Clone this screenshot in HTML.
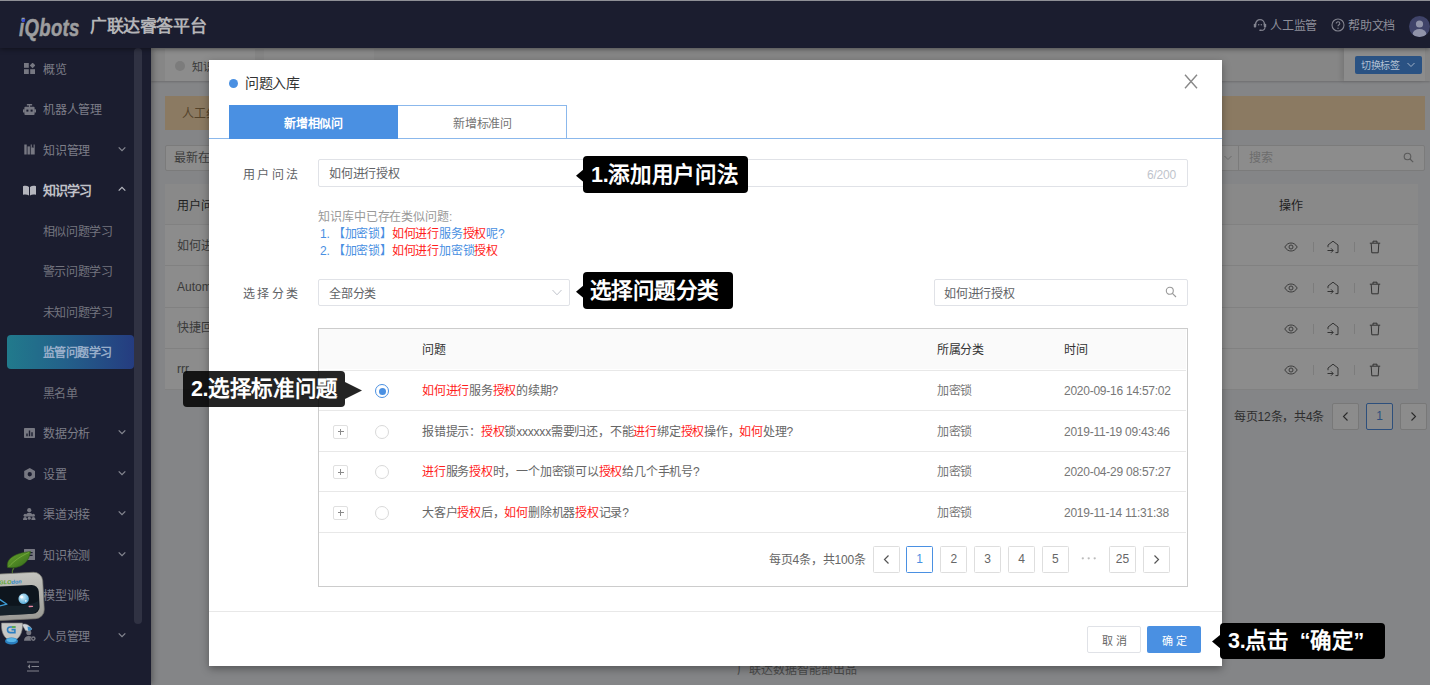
<!DOCTYPE html>
<html lang="zh-CN">
<head>
<meta charset="utf-8">
<title>iQbots</title>
<style>
*{box-sizing:border-box;margin:0;padding:0}
html,body{width:1430px;height:685px;overflow:hidden;background:#848587}
body{font-family:"Liberation Sans",sans-serif;font-size:12px;color:#606266;position:relative}
.abs,#app *{position:absolute}
#app{position:absolute;left:0;top:0;width:1430px;height:685px;overflow:hidden}
.t{white-space:nowrap;line-height:16px;height:16px;margin-top:1px}
/* header */
#hdr{left:0;top:0;width:1430px;height:48px;background:#1b1d2f;border-top:1px solid #8f9096;box-shadow:0 1px 5px rgba(0,0,0,.45)}
#side{left:0;top:48px;width:151px;height:637px;background:#1b1d2f;box-shadow:1px 0 7px rgba(0,0,0,.4)}
.si{left:43px;color:#7d7e88;font-size:12px;letter-spacing:-0.25px}
.sub{left:42.5px;color:#74757f;font-size:12px;letter-spacing:-0.3px}
.chev{left:118px;width:8px;height:6px}
.ico{left:24px;width:11px;height:11px}
/* page under mask */
.m{background:#8c8c8c}
/* modal */
#modal{left:209px;top:60px;width:1013px;height:606px;background:#fff;box-shadow:0 3px 8px rgba(0,0,0,.35)}
.callout{background:#000;border-radius:4px;color:#fff;font-weight:bold;font-size:21.5px;line-height:37px;height:37px;white-space:nowrap;padding-left:9px;letter-spacing:-0.3px}
.red{color:#ff1c1c;position:static!important}
.blu{color:#4a90e2;position:static!important}
.pg{width:27px;height:27px;border:1px solid #dedede;border-radius:1.5px;background:#fff;text-align:center;line-height:25px;color:#666;font-size:12px}
</style>
</head>
<body>
<div id="app">

<!-- ===== page under mask ===== -->
<div id="page" style="left:151px;top:48px;width:1279px;height:637px;background:#848587">
  <div style="left:0;top:0;width:1279px;height:33px;background:#868686;box-shadow:0 1px 2px rgba(0,0,0,.18)"></div>
  <div style="left:14px;top:1px;width:90px;height:32px;background:#8c8c8c"></div>
  <div style="left:113px;top:1px;width:110px;height:32px;background:#8a8a8a"></div>
  <div style="left:24px;top:13px;width:10px;height:10px;border-radius:50%;background:#7c7c7c"></div>
  <div class="t" style="left:41px;top:10px;font-size:11px;color:#3a3a3a">知识</div>
  <div style="left:1193px;top:0;width:81px;height:33px;background:#8c8c8c;box-shadow:-3px 0 4px rgba(0,0,0,.10)"></div>
  <div style="left:1204px;top:8px;width:67px;height:18px;background:#2a5283;border-radius:2px"></div>
  <div class="t" style="left:1210px;top:9px;font-size:10px;color:#b4c2d5;letter-spacing:-0.3px">切换标签</div>
  <svg style="left:1256px;top:14px;width:8px;height:6px" viewBox="0 0 8 6" fill="none" stroke="#9fb0c6" stroke-width="1"><path d="M.5 1L4 4.5L7.5 1"/></svg>
  <div style="left:14px;top:47.5px;width:1260px;height:34px;background:#8b7a62"></div>
  <div class="t" style="left:30px;top:57px;font-size:12px;color:#54432a;margin-left:1px">人工纠</div>
  <div style="left:14px;top:96.5px;width:1074px;height:26px;background:#8c8c8c;border:1px solid #7b7b7b;border-radius:2px 0 0 2px"></div>
  <div class="t" style="left:23px;top:101px;font-size:12px;color:#3c3c3c">最新在</div>
  <svg style="left:1072.5px;top:107px;width:8px;height:6px" viewBox="0 0 8 6" fill="none" stroke="#6c6c6c" stroke-width="1"><path d="M.5 1L4 4.5L7.5 1"/></svg>
  <div style="left:1087px;top:96.5px;width:187px;height:26px;background:#8c8c8c;border:1px solid #7b7b7b;border-radius:0 2px 2px 0"></div>
  <div class="t" style="left:1098px;top:101px;font-size:12px;color:#6d6d6d">搜索</div>
  <svg style="left:1252px;top:104px;width:11px;height:11px" viewBox="0 0 11 11" fill="none" stroke="#5a5a5a" stroke-width="1.1"><circle cx="4.5" cy="4.5" r="3.3"/><path d="M7 7l3.2 3.2"/></svg>
  <div style="left:14px;top:136.3px;width:1253px;height:40px;background:#898989"></div>
  <div style="left:14px;top:177px;width:1253px;height:164px;background:#8c8c8c"></div>
  <div style="left:14px;top:176.3px;width:1253px;height:1px;background:#818181"></div>
  <div style="left:14px;top:217.4px;width:1253px;height:1px;background:#818181"></div>
  <div style="left:14px;top:258.5px;width:1253px;height:1px;background:#818181"></div>
  <div style="left:14px;top:299.6px;width:1253px;height:1px;background:#818181"></div>
  <div style="left:14px;top:340.7px;width:1253px;height:1px;background:#818181"></div>
  <div class="t" style="left:26px;top:149px;font-size:12px;color:#1f1f1f">用户问</div>
  <div class="t" style="left:1128px;top:149px;font-size:12px;color:#1f1f1f">操作</div>
  <div class="t" style="left:26px;top:189px;font-size:12px;color:#3a3a3a">如何进</div>
  <div class="t" style="left:26px;top:230px;font-size:12px;color:#3a3a3a">Autom</div>
  <div class="t" style="left:26px;top:271px;font-size:12px;color:#3a3a3a">快捷回</div>
  <div class="t" style="left:26px;top:312px;font-size:12px;color:#3a3a3a">rrr</div>
  <svg style="left:1133px;top:193.5px;width:14px;height:10px" viewBox="0 0 14 10" fill="none" stroke="#333" stroke-width=".9"><path d="M.8 5C2.5 2.2 4.6 1 7 1s4.5 1.2 6.2 4C11.5 7.8 9.4 9 7 9S2.5 7.8.8 5z"/><circle cx="7" cy="5" r="2"/></svg>
  <div style="left:1162px;top:193.5px;width:1px;height:10px;background:#7c7c7c"></div>
  <svg style="left:1175px;top:191.5px;width:14px;height:14px" viewBox="0 0 14 14" fill="none" stroke="#333" stroke-width="1"><path d="M2 7.2V5l5-3.8L12 5v7.6H9.5"/><path d="M1.5 10.5h5.5M5 8.3l2.2 2.2L5 12.7"/></svg>
  <div style="left:1203px;top:193.5px;width:1px;height:10px;background:#7c7c7c"></div>
  <svg style="left:1218px;top:191.5px;width:12px;height:14px" viewBox="0 0 12 14" fill="none" stroke="#333" stroke-width="1"><path d="M.8 3.2h10.4M4 3V1.2h4V3M2.2 3.4l.6 9.4h6.4l.6-9.4"/></svg>
  <svg style="left:1133px;top:234.5px;width:14px;height:10px" viewBox="0 0 14 10" fill="none" stroke="#333" stroke-width=".9"><path d="M.8 5C2.5 2.2 4.6 1 7 1s4.5 1.2 6.2 4C11.5 7.8 9.4 9 7 9S2.5 7.8.8 5z"/><circle cx="7" cy="5" r="2"/></svg>
  <div style="left:1162px;top:234.5px;width:1px;height:10px;background:#7c7c7c"></div>
  <svg style="left:1175px;top:232.5px;width:14px;height:14px" viewBox="0 0 14 14" fill="none" stroke="#333" stroke-width="1"><path d="M2 7.2V5l5-3.8L12 5v7.6H9.5"/><path d="M1.5 10.5h5.5M5 8.3l2.2 2.2L5 12.7"/></svg>
  <div style="left:1203px;top:234.5px;width:1px;height:10px;background:#7c7c7c"></div>
  <svg style="left:1218px;top:232.5px;width:12px;height:14px" viewBox="0 0 12 14" fill="none" stroke="#333" stroke-width="1"><path d="M.8 3.2h10.4M4 3V1.2h4V3M2.2 3.4l.6 9.4h6.4l.6-9.4"/></svg>
  <svg style="left:1133px;top:275.5px;width:14px;height:10px" viewBox="0 0 14 10" fill="none" stroke="#333" stroke-width=".9"><path d="M.8 5C2.5 2.2 4.6 1 7 1s4.5 1.2 6.2 4C11.5 7.8 9.4 9 7 9S2.5 7.8.8 5z"/><circle cx="7" cy="5" r="2"/></svg>
  <div style="left:1162px;top:275.5px;width:1px;height:10px;background:#7c7c7c"></div>
  <svg style="left:1175px;top:273.5px;width:14px;height:14px" viewBox="0 0 14 14" fill="none" stroke="#333" stroke-width="1"><path d="M2 7.2V5l5-3.8L12 5v7.6H9.5"/><path d="M1.5 10.5h5.5M5 8.3l2.2 2.2L5 12.7"/></svg>
  <div style="left:1203px;top:275.5px;width:1px;height:10px;background:#7c7c7c"></div>
  <svg style="left:1218px;top:273.5px;width:12px;height:14px" viewBox="0 0 12 14" fill="none" stroke="#333" stroke-width="1"><path d="M.8 3.2h10.4M4 3V1.2h4V3M2.2 3.4l.6 9.4h6.4l.6-9.4"/></svg>
  <svg style="left:1133px;top:316.5px;width:14px;height:10px" viewBox="0 0 14 10" fill="none" stroke="#333" stroke-width=".9"><path d="M.8 5C2.5 2.2 4.6 1 7 1s4.5 1.2 6.2 4C11.5 7.8 9.4 9 7 9S2.5 7.8.8 5z"/><circle cx="7" cy="5" r="2"/></svg>
  <div style="left:1162px;top:316.5px;width:1px;height:10px;background:#7c7c7c"></div>
  <svg style="left:1175px;top:314.5px;width:14px;height:14px" viewBox="0 0 14 14" fill="none" stroke="#333" stroke-width="1"><path d="M2 7.2V5l5-3.8L12 5v7.6H9.5"/><path d="M1.5 10.5h5.5M5 8.3l2.2 2.2L5 12.7"/></svg>
  <div style="left:1203px;top:316.5px;width:1px;height:10px;background:#7c7c7c"></div>
  <svg style="left:1218px;top:314.5px;width:12px;height:14px" viewBox="0 0 12 14" fill="none" stroke="#333" stroke-width="1"><path d="M.8 3.2h10.4M4 3V1.2h4V3M2.2 3.4l.6 9.4h6.4l.6-9.4"/></svg>
  <div class="t" style="left:1083px;top:360px;font-size:12px;color:#2e2e2e;letter-spacing:-0.2px">每页12条，共4条</div>
  <div style="left:1180.5px;top:355px;width:27px;height:27px;background:#8c8c8c;border:1px solid #787878;border-radius:2px"><svg style="left:8px;top:7px;width:9px;height:11px" viewBox="0 0 9 11" fill="none" stroke="#2a2a2a" stroke-width="1.1"><path d="M6.5 1.5L2.5 5.5L6.5 9.5"/></svg></div>
  <div style="left:1215px;top:355px;width:27px;height:27px;background:#8c8c8c;border:1px solid #2d4f7c;border-radius:2px;text-align:center;line-height:25px;color:#2d4f7c;font-size:12px">1</div>
  <div style="left:1248.5px;top:355px;width:27px;height:27px;background:#8c8c8c;border:1px solid #787878;border-radius:2px"><svg style="left:8px;top:7px;width:9px;height:11px" viewBox="0 0 9 11" fill="none" stroke="#2a2a2a" stroke-width="1.1"><path d="M2.5 1.5L6.5 5.5L2.5 9.5"/></svg></div>
  <div class="t" style="left:586px;top:612.5px;font-size:12px;color:#4a4a4a">广联达数据智能部出品</div>
</div>

<!-- ===== sidebar ===== -->
<div id="side">
  <div style="left:7px;top:287px;width:126.5px;height:33.5px;border-radius:4px;background:linear-gradient(90deg,#217a8c 0%,#23618a 45%,#253c80 100%)"></div>
  <div class="t si" style="top:13px">概览</div>
  <svg style="left:24.1px;top:15.3px;width:11.0px;height:11.0px" viewBox="0 0 11 11" fill="#777882"><rect x="0" y="0" width="4.8" height="4.8"/><rect x="0" y="6.2" width="4.8" height="4.8"/><rect x="6.2" y="6.2" width="4.8" height="4.8"/><path d="M8.6 -.4L11.4 2.4L8.6 5.2L5.8 2.4z"/></svg>
  <div class="t si" style="top:53px">机器人管理</div>
  <svg style="left:23.1px;top:55.8px;width:13.0px;height:11.0px" viewBox="0 0 13 11" fill="#777882"><rect x="1.4" y="2.8" width="10.2" height="8.2" rx="1"/><rect x="3.8" y="0" width="5.4" height="1.6" rx=".5"/><rect x="5.9" y="1" width="1.2" height="2.2"/><rect x="0" y="5.2" width="1.8" height="3.4" rx=".5"/><rect x="11.2" y="5.2" width="1.8" height="3.4" rx=".5"/><rect x="3.4" y="5.6" width="2" height="2" fill="#1b1d2f"/><rect x="7.6" y="5.6" width="2" height="2" fill="#1b1d2f"/></svg>
  <div class="t si" style="top:94px">知识管理</div>
  <svg style="left:24.1px;top:96.3px;width:11.0px;height:11.0px" viewBox="0 0 11 11" fill="#777882"><rect x="0.3" y="0.5" width="2.4" height="10"/><rect x="3.5" y="2.4" width="2.4" height="8.1"/><path d="M6.7 0.5h4v10h-4zM7.8 0.5v3.6l.9-.9.9.9V0.5z" fill-rule="evenodd"/></svg>
  <svg class="chev" style="top:97.7px" viewBox="0 0 8 6" fill="none" stroke="#83848e" stroke-width="1.3"><path d="M.7 1.4L4 4.6L7.3 1.4"/></svg>
  <div class="t si" style="top:134px;color:#c0c1c8;font-weight:bold;font-size:13px;letter-spacing:-0.9px">知识学习</div>
  <svg style="left:23.1px;top:136.8px;width:13.0px;height:11.0px" viewBox="0 0 13 11" fill="#b4b5bd"><path d="M0 1.2c2.3-.7 4.4-.4 6 .8v8.4c-1.6-1-3.7-1.3-6-.6z"/><path d="M13 1.2c-2.3-.7-4.4-.4-6 .8v8.4c1.6-1 3.7-1.3 6-.6z"/></svg>
  <svg class="chev" style="top:138.2px" viewBox="0 0 8 6" fill="none" stroke="#b4b5bd" stroke-width="1.3"><path d="M.7 4.6L4 1.4L7.3 4.6"/></svg>
  <div class="t sub" style="top:175px">相似问题学习</div>
  <div class="t sub" style="top:215px">警示问题学习</div>
  <div class="t sub" style="top:256px">未知问题学习</div>
  <div class="t sub" style="top:296px;color:#98aeca;font-weight:bold;letter-spacing:-0.5px">监管问题学习</div>
  <div class="t sub" style="top:337px">黑名单</div>
  <div class="t si" style="top:377px">数据分析</div>
  <svg style="left:24.1px;top:379.8px;width:11.0px;height:11.0px" viewBox="0 0 11 11" fill="#777882"><path d="M.8 0h9.4a.8.8 0 0 1 .8.8v8.4a.8.8 0 0 1-.8.8H.8a.8.8 0 0 1-.8-.8V.8A.8.8 0 0 1 .8 0zM2.3 5.4h1.4v2.800H2.3zM4.800 2.6h1.4v5.6H4.800zM7.3 4.2h1.4v4H7.3z" fill-rule="evenodd"/></svg>
  <svg class="chev" style="top:381.2px" viewBox="0 0 8 6" fill="none" stroke="#83848e" stroke-width="1.3"><path d="M.7 1.4L4 4.6L7.3 1.4"/></svg>
  <div class="t si" style="top:418px">设置</div>
  <svg style="left:23.9px;top:419.6px;width:11.5px;height:12.5px" viewBox="0 0 11.5 12.5" fill="#777882"><path d="M5.75 0L11.3 3.1v6.3L5.75 12.5L.2 9.4V3.1zM5.75 4.1a2.15 2.15 0 1 0 0 4.3a2.15 2.15 0 1 0 0-4.3z" fill-rule="evenodd"/></svg>
  <svg class="chev" style="top:421.7px" viewBox="0 0 8 6" fill="none" stroke="#83848e" stroke-width="1.3"><path d="M.7 1.4L4 4.6L7.3 1.4"/></svg>
  <div class="t si" style="top:458px">渠道对接</div>
  <svg style="left:23.4px;top:460.3px;width:12.5px;height:12.0px" viewBox="0 0 12.5 12" fill="#777882"><circle cx="6.25" cy="2.2" r="2.1"/><path d="M2.6 8.6c0-2.4 1.5-3.800 3.650-3.800s3.650 1.4 3.650 3.800z"/><circle cx="2.1" cy="7.3" r="1.5"/><path d="M0 12c0-1.900.9-3 2.1-3s2.1 1.1 2.1 3z"/><circle cx="10.4" cy="7.3" r="1.5"/><path d="M8.3 12c0-1.900.9-3 2.1-3s2.1 1.1 2.1 3z"/><circle cx="6.25" cy="10.2" r="1.6"/></svg>
  <svg class="chev" style="top:462.2px" viewBox="0 0 8 6" fill="none" stroke="#83848e" stroke-width="1.3"><path d="M.7 1.4L4 4.6L7.3 1.4"/></svg>
  <div class="t si" style="top:499px">知识检测</div>
  <svg style="left:24.1px;top:501.3px;width:11.0px;height:11.0px" viewBox="0 0 11 11" fill="#777882"><path d="M.5 0h10a.5.5 0 0 1 .5.5v10a.5.5 0 0 1-.5.5H.5a.5.5 0 0 1-.5-.5V.5A.5.5 0 0 1 .5 0zM2.4 3h6.2v1.3H2.4zM2.4 5.7h6.2V7H2.4z" fill-rule="evenodd"/></svg>
  <svg class="chev" style="top:502.7px" viewBox="0 0 8 6" fill="none" stroke="#83848e" stroke-width="1.3"><path d="M.7 1.4L4 4.6L7.3 1.4"/></svg>
  <div class="t si" style="top:539px">模型训练</div>
  <div class="t si" style="top:580px">人员管理</div>
  <svg style="left:23.6px;top:582.3px;width:12.0px;height:11.0px" viewBox="0 0 12 11" fill="#777882"><circle cx="4.800" cy="2.7" r="2.5"/><path d="M0 10.800c0-3 2-4.900 4.800-4.900c1 0 1.900.3 2.7.8a3.3 3.3 0 0 0-.4 4.1z"/><circle cx="9.3" cy="8.6" r="2.3"/><circle cx="9.3" cy="8.6" r=".9" fill="#1b1d2f"/></svg>
  <svg class="chev" style="top:583.7px" viewBox="0 0 8 6" fill="none" stroke="#83848e" stroke-width="1.3"><path d="M.7 1.4L4 4.6L7.3 1.4"/></svg>
  <svg style="left:27px;top:612.5px;width:12px;height:11px" viewBox="0 0 12 11" fill="none" stroke="#83848e" stroke-width="1.2"><path d="M0 1h12M4.5 5.5H12M0 10h12"/><path d="M3 3.3L.6 5.5L3 7.7z" fill="#83848e" stroke="none"/></svg>
  <div style="left:134px;top:0;width:8px;height:576px;background:#303243;border-radius:4px"></div>
</div>

<!-- ===== header ===== -->
<div id="hdr">
  <div class="t" style="left:18.5px;top:12px;font-size:24px;line-height:28px;height:28px;font-style:italic;font-weight:bold;color:#9d9d9f;-webkit-text-stroke:0.5px #9d9d9f;letter-spacing:0.4px;transform:scaleX(.775);transform-origin:0 50%"><span style="position:static;color:#9d9d9f">i</span>Qbots</div>
  <div style="left:21.6px;top:17.6px;width:3.4px;height:3px;background:#3d4fd6;transform:skewX(-14deg)"></div>
  <div class="t" style="left:90px;top:13px;font-size:17px;line-height:24px;height:24px;font-weight:bold;color:#b4b4b7;letter-spacing:-0.4px">广联达睿答平台</div>
  <!-- headset -->
  <svg style="left:1253px;top:17px;width:14px;height:14px" viewBox="0 0 14 14" fill="none" stroke="#82838f" stroke-width="1.4"><path d="M2.6 7.2V6a4.4 4.4 0 0 1 8.8 0v1.2"/><rect x=".8" y="5.8" width="2.4" height="3.8" rx=".8" fill="#82838f" stroke="none"/><rect x="10.8" y="5.8" width="2.4" height="3.8" rx=".8" fill="#82838f" stroke="none"/><path d="M11.9 9.5c0 1.9-1.7 2.9-3.6 2.9" stroke-width="1.1"/><rect x="6.2" y="11.5" width="2.6" height="1.6" rx=".8" fill="#82838f" stroke="none"/><circle cx="5.7" cy="6.8" r=".75" fill="#82838f" stroke="none"/><circle cx="8.3" cy="6.8" r=".75" fill="#82838f" stroke="none"/></svg>
  <div class="t" style="left:1270px;top:16px;font-size:12px;color:#8d8e99;letter-spacing:-0.2px">人工监管</div>
  <!-- help -->
  <svg style="left:1331px;top:17px;width:14px;height:14px" viewBox="0 0 14 14" fill="none" stroke="#82838f" stroke-width="1.1"><circle cx="7" cy="7" r="6"/><path d="M5.2 5.6c0-1.1.8-1.8 1.8-1.8s1.8.7 1.8 1.7c0 1.3-1.8 1.3-1.8 2.8"/><circle cx="7" cy="10.2" r=".7" fill="#82838f" stroke="none"/></svg>
  <div class="t" style="left:1348px;top:16px;font-size:12px;color:#8d8e99;letter-spacing:-0.2px">帮助文档</div>
  <!-- avatar -->
  <svg style="left:1409px;top:15px;width:21px;height:21px" viewBox="0 0 21 21"><defs><clipPath id="av"><circle cx="10.5" cy="10.5" r="10.5"/></clipPath></defs><circle cx="10.5" cy="10.5" r="10.5" fill="#3f4369"/><g clip-path="url(#av)" fill="#9093a9"><circle cx="10.5" cy="8" r="3.6"/><ellipse cx="10.5" cy="18" rx="6.8" ry="5"/></g></svg>
</div>

<!-- ===== mascot ===== -->
<svg id="mascot" style="left:0;top:546px;width:48px;height:102px" viewBox="0 546 48 102">
  <defs>
    <linearGradient id="lf" x1="0" y1="0" x2="1" y2="1"><stop offset="0" stop-color="#6aa52e"/><stop offset="1" stop-color="#33691a"/></linearGradient>
    <linearGradient id="hd" x1="0" y1="0" x2="0" y2="1"><stop offset="0" stop-color="#c4c4bf"/><stop offset="1" stop-color="#9a9a95"/></linearGradient>
    <radialGradient id="ey" cx=".4" cy=".35" r=".7"><stop offset="0" stop-color="#d8f1fb"/><stop offset="1" stop-color="#4aa6d6"/></radialGradient>
  </defs>
  <!-- stem + leaf -->
  <path d="M12.5 573.5C12 571 12.5 569.5 14 568" fill="none" stroke="#4b6d2a" stroke-width="1.2"/>
  <path d="M7.5 567.5C6 560 12 553.5 30.5 551.5C29.5 561 22 569.5 7.5 567.5z" fill="url(#lf)" stroke="#2f5a17" stroke-width=".6"/>
  <path d="M9 566.5C14 561 20 556.5 29 552.5" fill="none" stroke="#a4d060" stroke-width=".6" opacity=".7"/>
  <!-- body -->
  <path d="M1.5 623C1 630 3 637 8 639.5h8c4.5-2.5 7-9 6.5-16.5z" fill="#c6c6c4" stroke="#7c7c7c" stroke-width=".6"/>
  <path d="M22 624.5c3-1.5 7 0 10 4.5c-1.5 2-4.5 2.5-6.5 1.5z" fill="#cfd4da" stroke="#8c8c8c" stroke-width=".5"/>
  <path d="M27.5 626.5c2 .2 3.8 1.2 4.5 2.8c-1 1.2-2.6 1.6-4 1.2z" fill="#3a8fcb"/>
  <ellipse cx="11.5" cy="641" rx="6.5" ry="3.6" fill="#2a7fc0"/>
  <ellipse cx="11.5" cy="640" rx="5" ry="2" fill="#58b4e6"/>
  <path d="M15.5 627h-5.2c-1.8 0-2.8 1.1-2.8 2.8s1 2.8 2.8 2.8h4.6v-3h-3.4" fill="none" stroke="#2c7fc2" stroke-width="1.6"/>
  <path d="M15.5 627h-3.5" fill="none" stroke="#5fb233" stroke-width="1.6"/>
  <!-- head -->
  <g transform="rotate(-3 20 596)">
    <rect x="-14" y="573" width="57.5" height="46.5" rx="9" fill="url(#hd)" stroke="#77776f" stroke-width=".7"/>
    <rect x="-12" y="585.5" width="51" height="29" rx="7" fill="#0d151d"/>
    <path d="M-10 600c12 6 36 8 48 2v6.5c-2 5-6 6-10 6h-38z" fill="#1a2731" opacity=".7"/>
    <text x="0" y="583.5" font-family="Liberation Sans, sans-serif" font-size="5.6" font-weight="bold" font-style="italic" fill="#2f86c6" style="position:static"><tspan fill="#58a82c">GLO</tspan>don</text>
    <circle cx="23.5" cy="599" r="5.2" fill="url(#ey)"/>
    <circle cx="21.5" cy="597" r="1.5" fill="#fff" opacity=".9"/>
    <circle cx="25.6" cy="601.2" r=".9" fill="#fff" opacity=".8"/>
    <path d="M-3 596.5l9.5 7l-13 2.5z" fill="none" stroke="#3f9ed8" stroke-width="1.3" stroke-linejoin="round"/>
    <rect x="28" y="606.3" width="4.6" height="1.3" rx=".6" fill="#f08aa6"/>
  </g>
</svg>

<!-- ===== modal ===== -->
<div id="modal">
  <div style="left:19.5px;top:18.5px;width:9px;height:9px;border-radius:50%;background:#4a90e2"></div>
  <div class="t" style="left:36px;top:13px;font-size:14px;line-height:18px;height:18px;color:#333;letter-spacing:-0.3px">问题入库</div>
  <svg style="left:975px;top:13.5px;width:14px;height:15px" viewBox="0 0 14 15" fill="none" stroke="#888" stroke-width="1.4"><path d="M1 .8L13 14.2M13 .8L1 14.2"/></svg>
  <div style="left:0;top:78px;width:1013px;height:1px;background:#8bb8ec"></div>
  <div style="left:20px;top:45px;width:169px;height:34px;background:#4a90e2"></div>
  <div style="left:189px;top:45px;width:169px;height:34px;background:#fff;border:1px solid #8bb8ec;border-left:none"></div>
  <div class="t" style="left:20px;top:55px;width:169px;text-align:center;color:#fff;font-weight:bold;font-size:12px;letter-spacing:-0.25px">新增相似问</div>
  <div class="t" style="left:189px;top:55px;width:169px;text-align:center;color:#747474;font-size:12px;letter-spacing:-0.3px">新增标准问</div>
  <div class="t" style="left:34px;top:106px;color:#606266;font-size:12px;letter-spacing:2.3px">用户问法</div>
  <div style="left:109px;top:99px;width:870px;height:28px;border:1px solid #e0e2e7;border-radius:2px;background:#fff"></div>
  <div class="t" style="left:120px;top:105px;color:#606266;font-size:12px;letter-spacing:-0.2px">如何进行授权</div>
  <div class="t" style="left:938px;top:105.5px;color:#c0c4cc;font-size:12px;letter-spacing:-0.2px">6/200</div>
  <div class="t" style="left:109px;top:148px;color:#999;font-size:12px;letter-spacing:-0.1px">知识库中已存在类似问题:</div>
  <div class="t" style="left:111px;top:165px;color:#4a90e2;font-size:12px;letter-spacing:-0.2px">1. 【加密锁】<span class="red">如何进行</span>服务<span class="red">授权</span>呢?</div>
  <div class="t" style="left:111px;top:182px;color:#4a90e2;font-size:12px;letter-spacing:-0.2px">2. 【加密锁】<span class="red">如何进行</span>加密锁<span class="red">授权</span></div>
  <div class="t" style="left:34px;top:225px;color:#606266;font-size:12px;letter-spacing:2.3px">选择分类</div>
  <div style="left:109px;top:219px;width:252px;height:27px;border:1px solid #e0e2e7;border-radius:2px;background:#fff"></div>
  <div class="t" style="left:120px;top:224.5px;color:#606266;font-size:12px;letter-spacing:-0.2px">全部分类</div>
  <svg style="left:343px;top:229px;width:10px;height:7px" viewBox="0 0 10 7" fill="none" stroke="#c0c4cc" stroke-width="1"><path d="M.5 1L5 5.8L9.5 1"/></svg>
  <div style="left:725px;top:219px;width:254px;height:27px;border:1px solid #e0e2e7;border-radius:2px;background:#fff"></div>
  <div class="t" style="left:735px;top:224.5px;color:#606266;font-size:12px;letter-spacing:-0.2px">如何进行授权</div>
  <svg style="left:956px;top:226px;width:12px;height:12px" viewBox="0 0 12 12" fill="none" stroke="#999" stroke-width="1.1"><circle cx="4.8" cy="4.8" r="3.5"/><path d="M7.4 7.4l3.6 3.6"/></svg>
  <div style="left:109px;top:268px;width:870px;height:259px;border:1px solid #ccc;background:#fff"></div>
  <div style="left:110px;top:269px;width:867px;height:40px;background:#fafafa"></div>
  <div style="left:110px;top:309.5px;width:867px;height:1px;background:#e8e8e8"></div>
  <div style="left:110px;top:350px;width:867px;height:1px;background:#e8e8e8"></div>
  <div style="left:110px;top:390.5px;width:867px;height:1px;background:#e8e8e8"></div>
  <div style="left:110px;top:431px;width:867px;height:1px;background:#e8e8e8"></div>
  <div style="left:110px;top:471.5px;width:867px;height:1px;background:#e8e8e8"></div>
  <div class="t" style="left:213px;top:281px;color:#333;font-size:12px;letter-spacing:-0.3px">问题</div>
  <div class="t" style="left:728px;top:281px;color:#333;font-size:12px;letter-spacing:-0.3px">所属分类</div>
  <div class="t" style="left:855px;top:281px;color:#333;font-size:12px;letter-spacing:-0.3px">时间</div>
  <div style="left:166px;top:324px;width:14px;height:14px;border-radius:50%;border:1px solid #4a90e2;background:#fff"></div>
  <div style="left:169.5px;top:327.5px;width:7px;height:7px;border-radius:50%;background:#4a90e2"></div>
  <div class="t" style="left:213px;top:322px;color:#666;font-size:12px;letter-spacing:-0.22px"><span class="red">如何进行</span>服务<span class="red">授权</span>的续期?</div>
  <div class="t" style="left:728px;top:322px;color:#777;font-size:12px;letter-spacing:-0.4px">加密锁</div>
  <div class="t" style="left:855px;top:322px;color:#777;font-size:12px;letter-spacing:-0.25px">2020-09-16 14:57:02</div>
  <div style="left:124px;top:364.5px;width:15px;height:14px;border:1px solid #e0e0e0;border-radius:2px;background:#fff"></div>
  <div style="left:128.5px;top:371px;width:6px;height:1px;background:#8a8a8a"></div>
  <div style="left:131px;top:368.5px;width:1px;height:6px;background:#8a8a8a"></div>
  <div style="left:166px;top:364.5px;width:14px;height:14px;border-radius:50%;border:1px solid #d9d9d9;background:#fff"></div>
  <div class="t" style="left:213px;top:362.5px;color:#666;font-size:12px;letter-spacing:-0.22px">报错提示：<span class="red">授权</span>锁xxxxxx需要归还，不能<span class="red">进行</span>绑定<span class="red">授权</span>操作，<span class="red">如何</span>处理?</div>
  <div class="t" style="left:728px;top:362.5px;color:#777;font-size:12px;letter-spacing:-0.4px">加密锁</div>
  <div class="t" style="left:855px;top:362.5px;color:#777;font-size:12px;letter-spacing:-0.25px">2019-11-19 09:43:46</div>
  <div style="left:124px;top:405px;width:15px;height:14px;border:1px solid #e0e0e0;border-radius:2px;background:#fff"></div>
  <div style="left:128.5px;top:411.5px;width:6px;height:1px;background:#8a8a8a"></div>
  <div style="left:131px;top:409px;width:1px;height:6px;background:#8a8a8a"></div>
  <div style="left:166px;top:405px;width:14px;height:14px;border-radius:50%;border:1px solid #d9d9d9;background:#fff"></div>
  <div class="t" style="left:213px;top:403px;color:#666;font-size:12px;letter-spacing:-0.22px"><span class="red">进行</span>服务<span class="red">授权</span>时，一个加密锁可以<span class="red">授权</span>给几个手机号?</div>
  <div class="t" style="left:728px;top:403px;color:#777;font-size:12px;letter-spacing:-0.4px">加密锁</div>
  <div class="t" style="left:855px;top:403px;color:#777;font-size:12px;letter-spacing:-0.25px">2020-04-29 08:57:27</div>
  <div style="left:124px;top:445.5px;width:15px;height:14px;border:1px solid #e0e0e0;border-radius:2px;background:#fff"></div>
  <div style="left:128.5px;top:452px;width:6px;height:1px;background:#8a8a8a"></div>
  <div style="left:131px;top:449.5px;width:1px;height:6px;background:#8a8a8a"></div>
  <div style="left:166px;top:445.5px;width:14px;height:14px;border-radius:50%;border:1px solid #d9d9d9;background:#fff"></div>
  <div class="t" style="left:213px;top:443.5px;color:#666;font-size:12px;letter-spacing:-0.22px">大客户<span class="red">授权</span>后，<span class="red">如何</span>删除机器<span class="red">授权</span>记录?</div>
  <div class="t" style="left:728px;top:443.5px;color:#777;font-size:12px;letter-spacing:-0.4px">加密锁</div>
  <div class="t" style="left:855px;top:443.5px;color:#777;font-size:12px;letter-spacing:-0.25px">2019-11-14 11:31:38</div>
  <div class="t" style="left:560px;top:491px;color:#666;font-size:12px;letter-spacing:-0.2px">每页4条，共100条</div>
  <div class="pg" style="left:664px;top:486px;"><svg style="left:8px;top:7px;width:9px;height:11px" viewBox="0 0 9 11" fill="none" stroke="#555" stroke-width="1.2"><path d="M6.5 1.5L2.5 5.5L6.5 9.5"/></svg></div>
  <div class="pg" style="left:697px;top:486px;border-color:#4a90e2;color:#4a90e2;">1</div>
  <div class="pg" style="left:731.3px;top:486px;">2</div>
  <div class="pg" style="left:765.2px;top:486px;">3</div>
  <div class="pg" style="left:799px;top:486px;">4</div>
  <div class="pg" style="left:832.8px;top:486px;">5</div>
  <div class="pg" style="left:900px;top:486px;">25</div>
  <div class="pg" style="left:934px;top:486px;"><svg style="left:8px;top:7px;width:9px;height:11px" viewBox="0 0 9 11" fill="none" stroke="#555" stroke-width="1.2"><path d="M2.5 1.5L6.5 5.5L2.5 9.5"/></svg></div>
  <svg style="left:870px;top:495px;width:20px;height:6px" viewBox="0 0 20 6" fill="#bcbcbc"><circle cx="3.8" cy="3.3" r="1.15"/><circle cx="9.7" cy="3.3" r="1.15"/><circle cx="15.7" cy="3.3" r="1.15"/></svg>
  <div style="left:0;top:551px;width:1013px;height:1px;background:#e8e8e8"></div>
  <div style="left:878px;top:566px;width:54px;height:27px;border:1px solid #e0e2e7;border-radius:2px;background:#fff"></div>
  <div class="t" style="left:878px;top:572px;width:54px;text-align:center;color:#666;font-size:11px;letter-spacing:3px;text-indent:3px">取消</div>
  <div style="left:938px;top:566px;width:54px;height:27px;border-radius:2px;background:#4a90e2"></div>
  <div class="t" style="left:938px;top:572px;width:54px;text-align:center;color:#fff;font-size:11px;letter-spacing:3px;text-indent:3px">确定</div>
</div>

<!-- ===== callouts ===== -->
<div id="callouts" style="left:0;top:0;width:1430px;height:685px">
  <div class="callout" style="left:583px;top:155.5px;width:165px;height:37.5px;line-height:38.5px;padding-left:8px">1.添加用户问法</div>
  <svg style="left:576px;top:168.5px;width:8px;height:13.4px" viewBox="0 0 8 14" preserveAspectRatio="none"><path d="M8 0L0 7L8 14z" fill="#000"/></svg>
  <div class="callout" style="left:583px;top:272px;width:150px;height:37px;line-height:38px;padding-left:7px;letter-spacing:-0.6px">选择问题分类</div>
  <svg style="left:575.6px;top:284.6px;width:8px;height:13.4px" viewBox="0 0 8 14" preserveAspectRatio="none"><path d="M8 0L0 7L8 14z" fill="#000"/></svg>
  <div class="callout" style="left:183px;top:371px;width:162px;height:36px;line-height:36px;padding-left:8px;letter-spacing:-0.4px;background:rgba(0,0,0,.86)">2.选择标准问题</div>
  <svg style="left:345px;top:382px;width:17px;height:17px" viewBox="0 0 17 17"><path d="M0 0L17 8.5L0 17z" fill="rgba(0,0,0,.86)"/></svg>
  <div class="callout" style="left:1220px;top:622.7px;width:164.5px;height:36px;line-height:37px;padding-left:8px">3.点击<span style="position:static;margin-left:11px">“确定”</span></div>
  <svg style="left:1212.4px;top:634.5px;width:8px;height:13.2px" viewBox="0 0 8 14" preserveAspectRatio="none"><path d="M8 0L0 7L8 14z" fill="#000"/></svg>
</div>

</div>
</body>
</html>
